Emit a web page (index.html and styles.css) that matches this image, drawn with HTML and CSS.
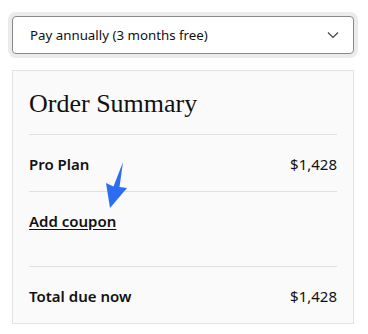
FILE: index.html
```html
<!DOCTYPE html>
<html lang="en">
<head>
    <meta charset="UTF-8">
    <meta name="viewport" content="width=device-width, initial-scale=1.0">
    <title>Order Summary</title>
    <link rel="stylesheet" href="styles.css">
</head>
<body>
    <main class="checkout">
        <div class="billing-select">
            <span>Pay annually (3 months free)</span>
            <svg class="chevron" width="12" height="8" viewBox="0 0 12 8">
                <path d="M1 1.5 L6 6.5 L11 1.5" fill="none" stroke="#444" stroke-width="1.2"/>
            </svg>
        </div>

        <section class="summary">
            <h2>Order Summary</h2>
            <div class="row">
                <span class="label">Pro Plan</span>
                <span>$1,428</span>
            </div>
            <div class="coupon">
                <a href="#" class="label">Add coupon</a>
                <!-- pointer arrow -->
                <svg class="pointer" width="30" height="50" viewBox="0 0 30 50">
                    <polygon points="21,0 17.5,25 25,26 8,46 4,21 11.5,24.5" fill="#2b6ef2"/>
                </svg>
            </div>
            <div class="row total">
                <span class="label">Total due now</span>
                <span>$1,428</span>
            </div>
        </section>
    </main>
</body>
</html>
```

FILE: styles.css
```css
body {
    margin: 0;
    background-color: #ffffff;
    color: #111111;
    font-family: "Noto Sans", "Open Sans", sans-serif;
}

.checkout {
    padding: 16px 14px 0 12px;
}

.billing-select {
    height: 38px;
    box-sizing: border-box;
    border: 1px solid #8a8a8a;
    border-radius: 4px;
    box-shadow: 0 0 0 4px #ebebeb;
    background-color: #fff;
    display: flex;
    align-items: center;
    justify-content: space-between;
    padding: 0 14px 0 17px;
    font-size: 13.3px;
}

.chevron {
    display: block;
}

.summary {
    margin-top: 16px;
    background-color: #fafafa;
    border: 1px solid #e3e3e3;
    padding: 16px 16px 0 16px;
}

h2 {
    font-family: "Liberation Serif", serif;
    font-weight: normal;
    font-size: 26px;
    line-height: 32px;
    margin: 0;
    padding-top: 1px;
    padding-bottom: 14px;
    border-bottom: 1px solid #e0e0e0;
}

.row {
    display: flex;
    justify-content: space-between;
    font-size: 15px;
    line-height: 20px;
    padding: 19px 0 17px 0;
    border-bottom: 1px solid #e0e0e0;
}

.label {
    font-weight: 600;
}

.coupon {
    position: relative;
    font-size: 15px;
    line-height: 20px;
    padding: 19px 0 35px 0;
    border-bottom: 1px solid #e0e0e0;
}

.coupon a {
    color: #111111;
    text-decoration: underline;
    text-underline-offset: 2px;
}

.pointer {
    position: absolute;
    left: 73px;
    top: -30px;
}

.total {
    border-bottom: none;
    padding: 19px 0 17px 0;
}
```
